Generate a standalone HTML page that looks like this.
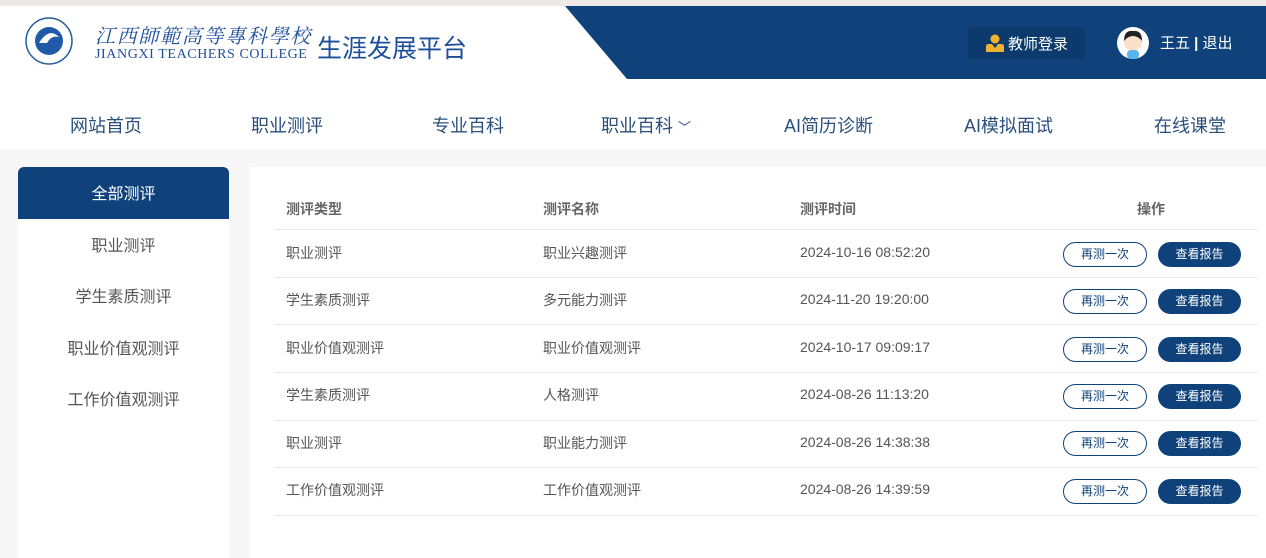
<!DOCTYPE html>
<html><head><meta charset="utf-8"><style>
*{margin:0;padding:0;box-sizing:border-box}
body{width:1266px;height:558px;overflow:hidden;background:#f7f7f7;font-family:"Liberation Sans","Noto Sans CJK SC",sans-serif;position:relative}
.abs{position:absolute}
.top{left:0;top:0;width:1266px;height:6px;background:#eee9e4}
.hdr{left:0;top:6px;width:1266px;height:143px;background:#fff}
.nav a{position:absolute;top:112px;font-size:18px;color:#2a4f7c;text-decoration:none}
.side{left:18px;top:167px;width:211px;height:391px;background:#fff;border-radius:6px 6px 0 0}
.side div{height:51.5px;line-height:51.5px;padding-top:2px;text-align:center;font-size:16px;color:#555}
.side .on{background:#0f427a;color:#fff;border-radius:6px 6px 0 0}
.panel{left:250px;top:167px;width:1016px;height:391px;background:#fff}
.row{position:absolute;left:275px;width:983px;border-bottom:1px solid #e8e8e8;font-size:14px;color:#555}
.row span{position:absolute}
.b1,.b2{position:absolute;top:12px;width:84px;height:25px;border-radius:13px;font-size:12px;text-align:center;line-height:23px}
.b1{left:788px;border:1px solid #0f427a;color:#0f427a}
.b2{left:883px;width:83px;background:#0f427a;color:#fff;border:1px solid #0f427a}
</style></head><body>
<div class="abs top"></div>
<div class="abs hdr"></div>
<svg class="abs" style="left:0;top:6px" width="1266" height="74"><polygon points="565,0 1266,0 1266,73 627,73" fill="#0f427a"/></svg>
<svg class="abs" style="left:25px;top:13px" width="48" height="56"><circle cx="24" cy="28" r="23" fill="#fff" stroke="#2a5e9c" stroke-width="1.5"/><circle cx="24" cy="28" r="14" fill="#1e5aa8"/><path d="M14 30 q10 -16 20 -6 q-8 -2 -12 6 z" fill="#fff"/></svg>
<div class="abs" style="left:95px;top:20px;font-family:'Liberation Serif','Noto Serif CJK SC',serif;font-size:20px;color:#1e4f9a;letter-spacing:1.7px;font-style:italic;white-space:nowrap">江西師範高等專科學校</div>
<div class="abs" style="left:95px;top:47px;font-family:'Liberation Serif',serif;font-size:14px;color:#1e4f9a;letter-spacing:0.6px;white-space:nowrap">JIANGXI TEACHERS COLLEGE</div>
<div class="abs" style="left:317px;top:29px;font-size:25px;color:#1e4f9a">生涯发展平台</div>
<div class="abs" style="left:968px;top:27px;width:117px;height:32px;background:#0d3a6c;border-radius:3px"></div>
<svg class="abs" style="left:985px;top:34px" width="20" height="18"><circle cx="10" cy="5" r="4.5" fill="#f0b030"/><path d="M1 18 v-6 q0 -2 3 -2 h3 l3 4 3 -4 h3 q3 0 3 2 v6z" fill="#f0b030"/></svg>
<div class="abs" style="left:1008px;top:33px;font-size:15px;color:#fff">教师登录</div>
<svg class="abs" style="left:1114px;top:26px" width="38" height="34"><circle cx="19" cy="17" r="16" fill="#fff"/><circle cx="19" cy="16" r="9" fill="#fde0c8"/><path d="M10 15 q0 -11 9 -10 q9 -1 9 10 q-4 -5 -9 -5 q-5 0 -9 5z" fill="#222"/><rect x="13" y="24" width="12" height="9" rx="4" fill="#5ab4f0"/></svg>
<div class="abs" style="left:1160px;top:32px;font-size:15px;color:#fff">王五 <b style="font-weight:bold">|</b> 退出</div>
<div class="nav"><a style="left:70px">网站首页</a><a style="left:251px">职业测评</a><a style="left:432px">专业百科</a><a style="left:601px">职业百科 <span style="font-size:13px">﹀</span></a><a style="left:784px">AI简历诊断</a><a style="left:964px">AI模拟面试</a><a style="left:1154px">在线课堂</a></div>
<div class="abs side"><div class="on">全部测评</div><div>职业测评</div><div>学生素质测评</div><div>职业价值观测评</div><div>工作价值观测评</div></div>
<div class="abs panel"></div>
<div class="row" style="top:185px;height:45px;color:#666;font-weight:bold"><span style="left:11px;top:14px">测评类型</span><span style="left:268px;top:14px">测评名称</span><span style="left:525px;top:14px">测评时间</span><span style="left:862px;top:14px">操作</span></div>
<div class="row" style="top:230px;height:48px"><span style="left:11px;top:13px">职业测评</span><span style="left:268px;top:13px">职业兴趣测评</span><span style="left:525px;top:14px">2024-10-16 08:52:20</span><div class="b1">再测一次</div><div class="b2">查看报告</div></div>
<div class="row" style="top:278px;height:47px"><span style="left:11px;top:12px">学生素质测评</span><span style="left:268px;top:12px">多元能力测评</span><span style="left:525px;top:13px">2024-11-20 19:20:00</span><div class="b1" style="top:11px">再测一次</div><div class="b2" style="top:11px">查看报告</div></div>
<div class="row" style="top:325px;height:48px"><span style="left:11px;top:13px">职业价值观测评</span><span style="left:268px;top:13px">职业价值观测评</span><span style="left:525px;top:14px">2024-10-17 09:09:17</span><div class="b1">再测一次</div><div class="b2">查看报告</div></div>
<div class="row" style="top:373px;height:48px"><span style="left:11px;top:12px">学生素质测评</span><span style="left:268px;top:12px">人格测评</span><span style="left:525px;top:13px">2024-08-26 11:13:20</span><div class="b1" style="top:11px">再测一次</div><div class="b2" style="top:11px">查看报告</div></div>
<div class="row" style="top:421px;height:47px"><span style="left:11px;top:12px">职业测评</span><span style="left:268px;top:12px">职业能力测评</span><span style="left:525px;top:13px">2024-08-26 14:38:38</span><div class="b1" style="top:10px">再测一次</div><div class="b2" style="top:10px">查看报告</div></div>
<div class="row" style="top:468px;height:48px"><span style="left:11px;top:12px">工作价值观测评</span><span style="left:268px;top:12px">工作价值观测评</span><span style="left:525px;top:13px">2024-08-26 14:39:59</span><div class="b1" style="top:11px">再测一次</div><div class="b2" style="top:11px">查看报告</div></div>
</body></html>
